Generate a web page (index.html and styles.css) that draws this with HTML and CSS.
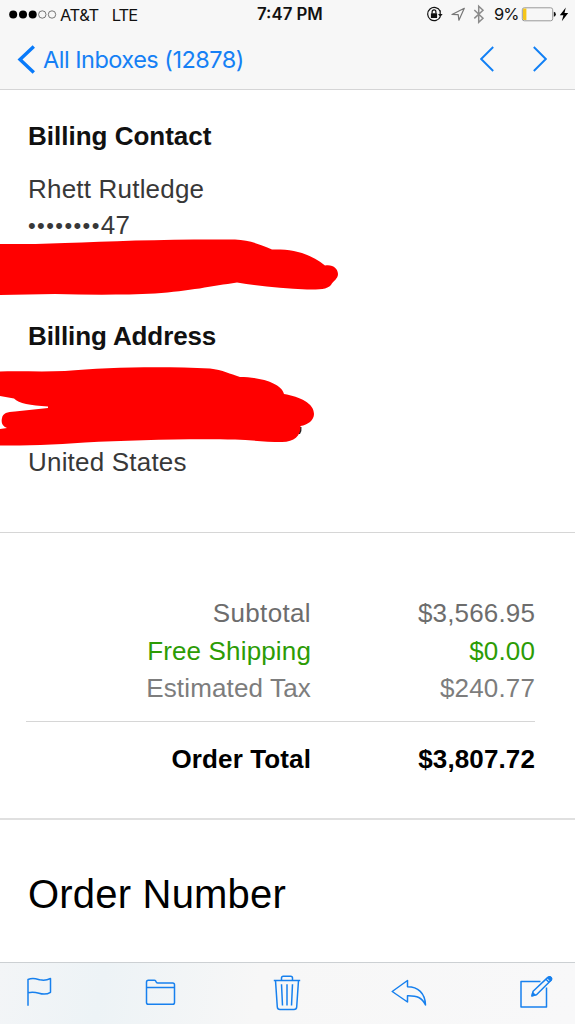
FILE: index.html
```html
<!DOCTYPE html>
<html lang="en">
<head>
<meta charset="utf-8">
<title>Mail</title>
<link rel="stylesheet" href="styles.css">
</head>
<body>
<div class="screen">
  <header class="top">
    <div class="status">
      <div class="status-left">
        <svg class="signal" width="48" height="10" viewBox="0 0 48 10"><g fill="#000"><circle cx="4.2" cy="4.500" r="4"/><circle cx="14" cy="4.500" r="4"/><circle cx="23.7" cy="4.500" r="4"/></g><g fill="none" stroke="#555" stroke-width=".8"><circle cx="33.3" cy="4.500" r="3.7"/><circle cx="43" cy="4.500" r="3.7"/></g></svg>
        <span class="carrier">AT&amp;T</span>
        <span class="network">LTE</span>
      </div>
      <span class="time">7:47 PM</span>
      <div class="status-right">
        <svg width="150" height="24" viewBox="425 2 150 24" fill="none">
          <path d="M440.2 11.2A6.6 6.6 0 1 0 440.4 16.5" stroke="#111" stroke-width="1.2"/>
          <path d="M440.2 10.5V15" stroke="#111" stroke-width="1.2"/>
          <path d="M438 14h4.6l-2.3 3z" fill="#111"/>
          <rect x="430.9" y="13.2" width="6.2" height="4.7" rx=".5" fill="#111"/>
          <path d="M432.1 13.5v-1.7a1.9 1.9 0 0 1 3.8 0v1.7" stroke="#111" stroke-width="1.2"/>
          <path d="M464.3 8.3L452 14.5L458.2 14.6L458.9 20.2Z" stroke="#777" stroke-width="1.2" stroke-linejoin="round"/>
          <path d="M474.3 10L483 18.2L478.7 22.3V6.2L483 10.2L474.3 18.4" stroke="#8b8b8b" stroke-width="1.5"/>
          <rect x="522.3" y="7.8" width="30.4" height="13" rx="2" stroke="#999" stroke-width="1"/>
          <path d="M524 8.500h2.400v11.600h-2.400q-1 0-1-1v-9.600q0-1 1-1z" fill="#f5c518"/>
          <path d="M553.800 11.800q2 .3 2 2.500t-2 2.500z" fill="#111"/>
          <path d="M565.800 7.500L559.800 15.300H563.400L561.800 21.300L568.200 13.100H564.500Z" fill="#000"/>
        </svg>
        <span class="battery-text">9%</span>
      </div>
    </div>
    <nav class="nav">
      <a class="back"><svg width="19" height="29" viewBox="0 0 19 29" fill="none"><path d="M17.800 1.400L4 14.500L17.800 27.600" stroke="#087afa" stroke-width="3.4"/></svg><span>All Inboxes (12878)</span></a>
      <div class="pager">
        <svg width="14" height="26" viewBox="0 0 14 26" fill="none"><path d="M13.200 1L1.200 13L13.200 25" stroke="#1280f5" stroke-width="1.900"/></svg>
        <svg width="14" height="26" viewBox="0 0 14 26" fill="none"><path d="M.8 1L12.800 13L.8 25" stroke="#1280f5" stroke-width="1.900"/></svg>
      </div>
    </nav>
  </header>

  <main class="mail">
    <section class="billing">
      <h2 class="heading">Billing Contact</h2>
      <p class="line name">Rhett Rutledge</p>
      <p class="line phone"><span class="dots">••••••••</span>47</p>
      <h2 class="heading address-heading">Billing Address</h2>
      <p class="line country">United States</p>
      <svg class="scribbles" width="350" height="220" viewBox="0 235 350 220" fill="#f00">
        <path d="M0 244C28 244 45 244 65 243C115 241 170 239 235 239.500C249 240 259 244 272 249.500C294 249 309 253 325 265.500C333 264 338 269 338 274C338 279 333 281 331 285C327 289.500 320 289.500 307 289.500C282 288.500 258 286 237 282.500C212 286 190 291 155 293.500C125 295 90 295 55 294L0 295Z"/>
        <path d="M296 427H301.500Q302 431 300 434H294Z" fill="#222"/>
        <path d="M0 371.500C22 371 45 372 65 371C105 367 165 366 210 368.500C223 370 230 374 240 377C257 377 281 382 284 394C300 397 314 403 314 414C314 420 308 425 300.500 426C301 435 295 442 282 442C265 442 250 440 235 439.500C190 438.500 130 440 85 442.500C55 445 25 445.500 0 445.500V429L7 428C2 426 1 423 2 418C3 413 7 412 15 411.500L48 408V406.500C30 405.500 19 403.500 14 398.500L0 396Z"/>
      </svg>
    </section>
    <section class="summary">
      <dl class="totals">
        <dt>Subtotal</dt><dd>$3,566.95</dd>
        <dt class="free">Free Shipping</dt><dd class="free">$0.00</dd>
        <dt class="tax">Estimated Tax</dt><dd class="tax">$240.77</dd>
      </dl>
      <dl class="grand">
        <dt>Order Total</dt><dd>$3,807.72</dd>
      </dl>
    </section>
    <section class="order">
      <h1 class="order-title">Order Number</h1>
    </section>
  </main>

  <footer class="toolbar">
    <svg class="flag" width="26" height="30" viewBox="0 0 26 30"><path d="M1 28.800V2.500C6 .5 9 1.800 13 2.800C17 3.600 20 3.200 23.500 1.500V15.300C20 17.500 16 17.500 12 16.300C8 15.200 5 15 1 15.800"/></svg>
    <svg class="folder" width="31" height="28" viewBox="0 0 31 28"><path d="M1.500 24.500V4.300Q1.500 2.300 3.400 2.300H9.500Q10.700 2.300 11 3.600Q11.300 5 12.700 5H27.700Q29.500 5 29.500 6.800V24.500Q29.500 26.300 27.700 26.300H3.400Q1.500 26.300 1.500 24.500ZM1.500 9.500H29.500"/></svg>
    <svg class="trash" width="28" height="37" viewBox="0 0 28 37"><path d="M.8 6.500H27.200M8.500 6.500V4Q8.500 2.200 10.300 2.200H17.700Q19.500 2.200 19.500 4V6.500M2.500 6.500L4.300 33Q4.500 35.500 7 35.500H21Q23.500 35.500 23.700 33L25.500 6.500M8.500 10.300L9.500 31.500M14 10.300V31.500M19.500 10.300L18.500 31.500"/></svg>
    <svg class="reply" width="36" height="29" viewBox="0 0 36 29"><path d="M1.200 13.500L16.500 2.500V8.800C27 8.800 34 15 34.500 27C31 19.500 26 17.500 16.500 17.700V24Z"/></svg>
    <svg class="compose" width="35" height="34" viewBox="0 0 35 34"><path d="M21.500 6.400H2V31.900H27.500V12.500"/><path d="M13 20.900L14.100 16.200L28.800 2.400Q30.200 1 31.800 2.500Q33.300 4 31.800 5.500L17.500 19.700Z"/><path d="M27 4.300L30 7.300"/><path class="fill" d="M29 3Q30.500 1 32 2.500Q33.300 4 31.500 5.700ZM13 20.900L13.700 17.800L16 20Z"/></svg>
  </footer>
</div>
</body>
</html>
```
FILE: styles.css
```css
* { box-sizing: border-box; }
body { margin: 0; background: #fff; }
h1, h2, p, dl, dd { margin: 0; }
svg { display: block; flex: none; }

.screen {
  width: 575px;
  height: 1024px;
  display: flex;
  flex-direction: column;
  overflow: hidden;
  font-family: "Liberation Sans", Arial, sans-serif;
  color: #111;
}

.top {
  height: 90px;
  flex: none;
  background: #f7f7f7;
  border-bottom: 1px solid #d5d5d6;
  font-family: Inter, "Liberation Sans", sans-serif;
}
.status {
  height: 30px;
  display: grid;
  grid-template-columns: 257px 68px 1fr;
  color: #111;
  font-size: 16.5px;
  line-height: 29px;
}
.status-left { display: flex; align-items: center; padding-left: 9px; }
.carrier { margin-left: 3px; letter-spacing: -.4px; }
.network { margin-left: 13px; letter-spacing: -1px; }
.time { font-weight: 600; font-size: 16.8px; white-space: nowrap; }
.status-right { position: relative; padding: 2px 0 0 100px; }
.battery-text { position: absolute; left: 169px; top: 0; letter-spacing: -.9px; }

.nav {
  height: 59px;
  display: flex;
  justify-content: space-between;
  padding: 0 28px 0 16px;
}
.back {
  display: flex;
  align-items: center;
  gap: 8px;
  height: 58px;
  color: #1580f5;
  font-size: 23.5px;
  letter-spacing: -.5px;
}
.pager { display: flex; align-items: center; gap: 39px; height: 58px; }

.mail { flex: 1; display: flex; flex-direction: column; font-size: 26px; }
.heading { font-size: 26px; line-height: 36px; font-weight: 700; }
.line { line-height: 36px; color: #383838; letter-spacing: .2px; }
.billing {
  position: relative;
  height: 443px;
  padding: 28px 28px 0;
  border-bottom: 1px solid #d6d6d6;
}
.name { margin-top: 17px; }
.phone { height: 36px; }
.dots { font-size: 22px; letter-spacing: 1.4px; position: relative; top: -1px; }
.address-heading { margin-top: 75px; letter-spacing: -.1px; }
.country { margin-top: 90px; }
.scribbles { position: absolute; left: 0; top: 145px; }

.summary {
  height: 287px;
  padding: 62px 40px 0 26px;
  border-bottom: 2px solid #e0e0e0;
}
.totals, .grand {
  display: grid;
  grid-template-columns: 285px 1fr;
  text-align: right;
}
.totals {
  height: 127px;
  grid-auto-rows: 37.5px;
  line-height: 37.5px;
  color: #6d6d6d;
  letter-spacing: .15px;
  border-bottom: 1px solid #d6d6d6;
}
.totals dt:first-child { letter-spacing: .35px; }
.totals .free { color: #2c9c05; }
.totals .tax { color: #7d7d7d; }
.grand { margin-top: 19px; line-height: 36px; font-weight: 700; color: #000; letter-spacing: .12px; }

.order { padding: 51px 28px 0; }
.order-title { font-size: 40px; line-height: 46px; font-weight: 400; color: #000; letter-spacing: .2px; }

.toolbar {
  height: 62px;
  flex: none;
  display: flex;
  align-items: flex-start;
  padding-left: 27px;
  border-top: 1px solid #ccd0d3;
  background: linear-gradient(100deg, #f3f5f7, #edf3f6 18%, #f7f7f7 45%, #f8f8f9);
}
.flag { margin-top: 14px; }
.folder { margin: 15px 0 0 92px; }
.trash { margin: 11px 0 0 97px; }
.reply { margin: 15px 0 0 90px; }
.compose { margin: 12px 0 0 92px; }
.toolbar path {
  fill: none;
  stroke: #1780ee;
  stroke-width: 1.5;
  stroke-linejoin: round;
}
.toolbar .fill { fill: #1780ee; }
```
